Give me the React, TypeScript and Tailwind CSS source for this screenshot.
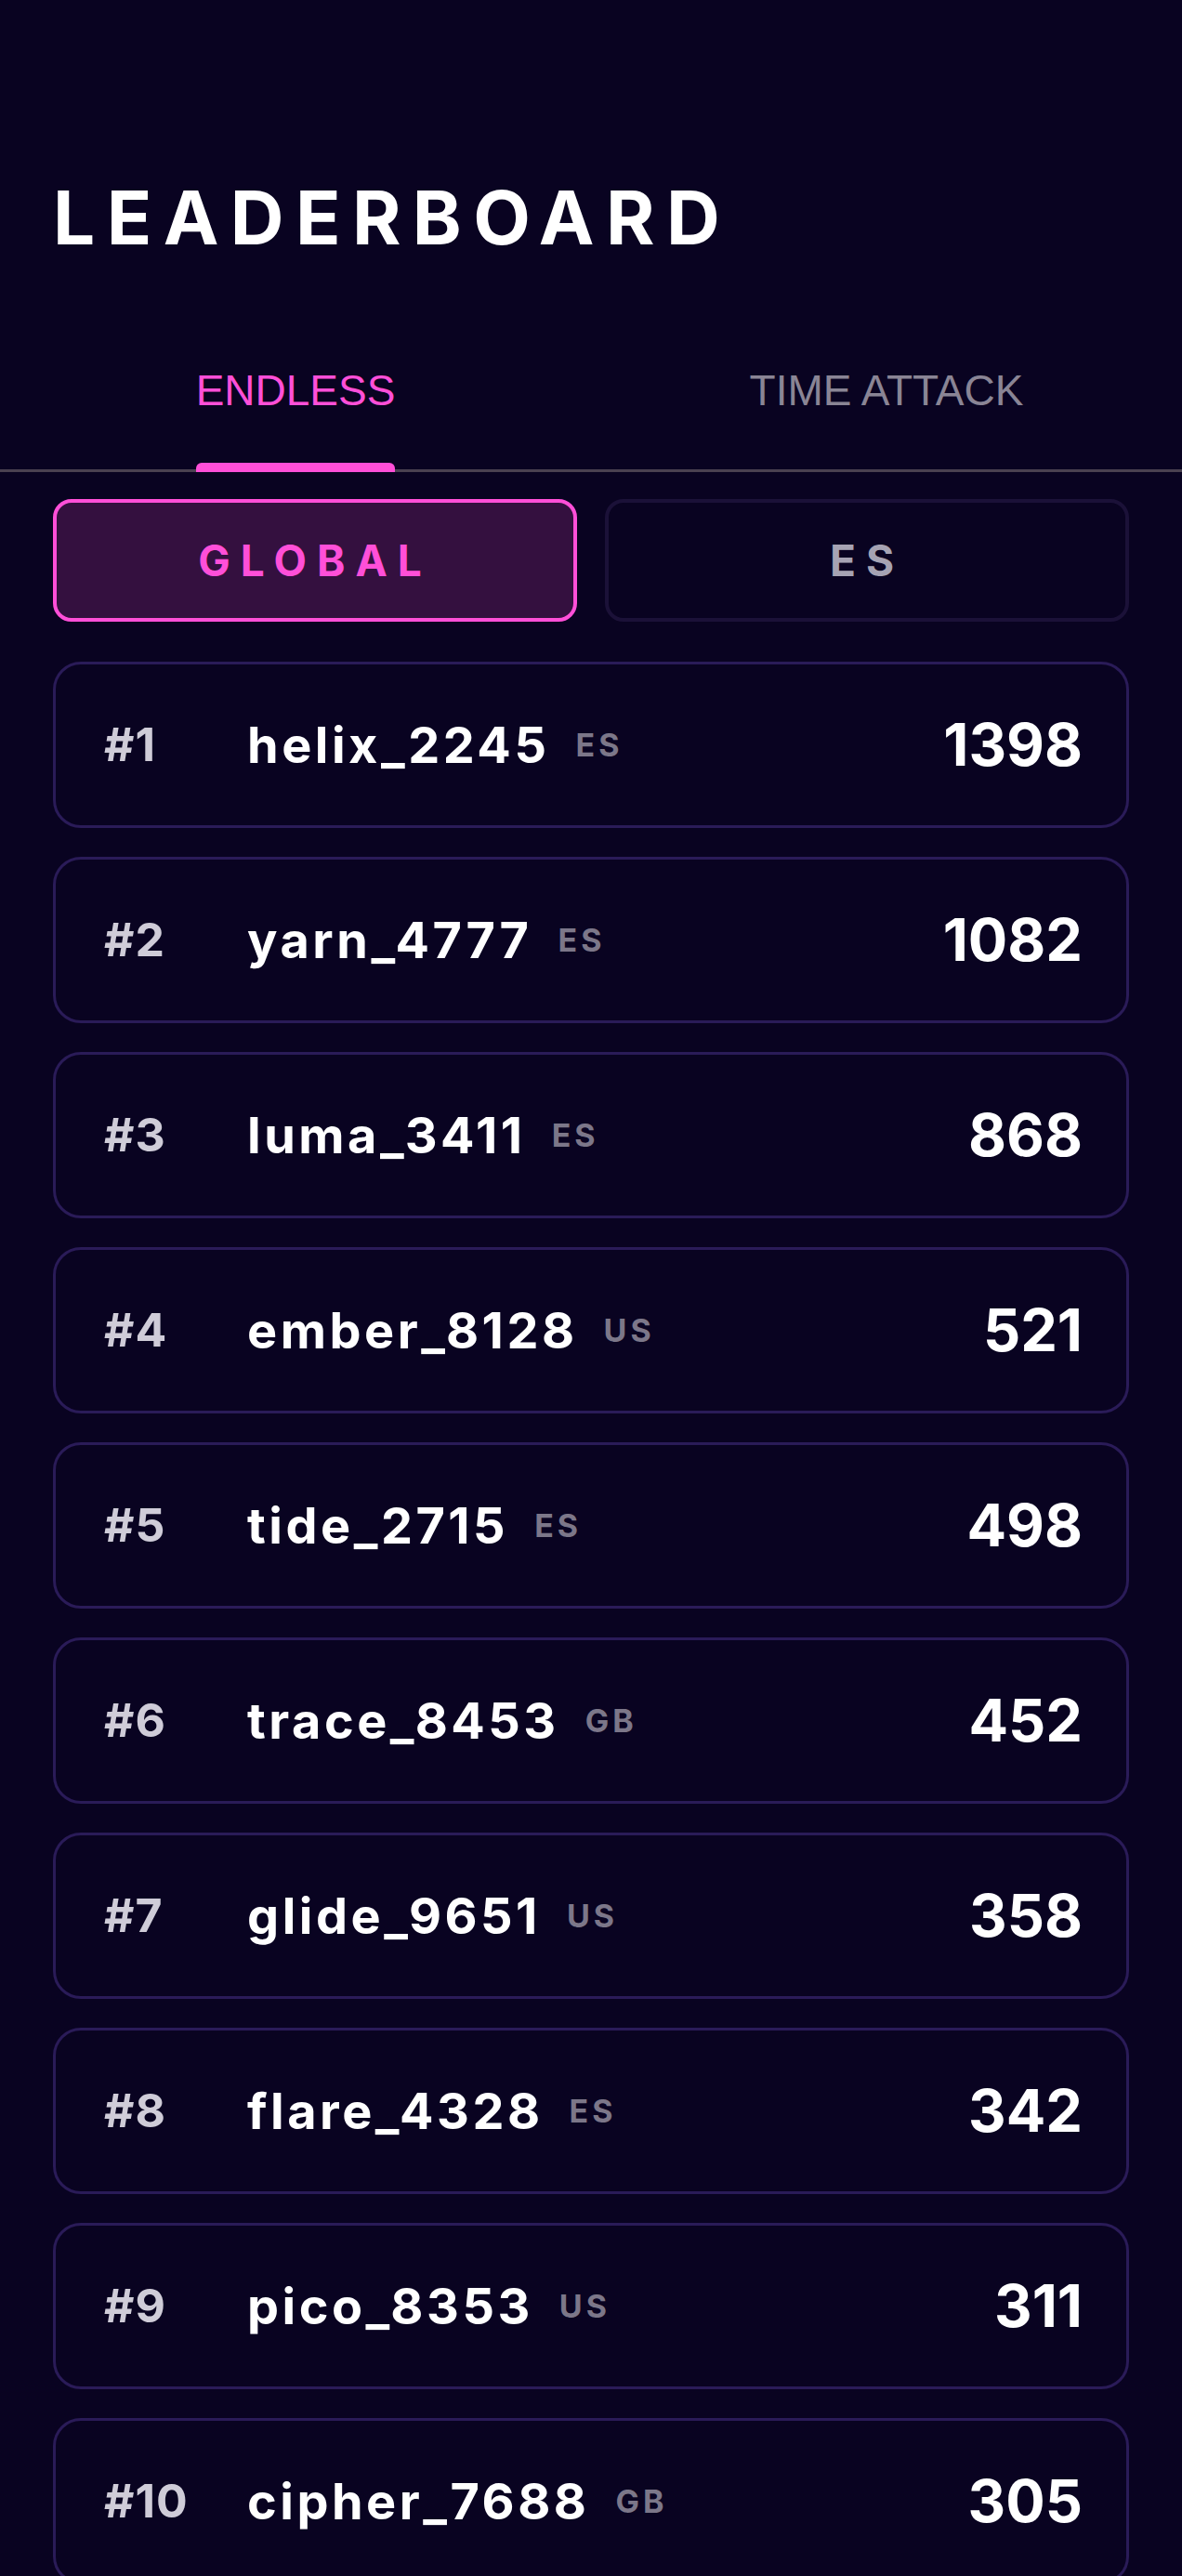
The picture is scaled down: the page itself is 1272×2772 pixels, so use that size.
import { useState } from 'react';

type Entry = {
  rank: number;
  name: string;
  country: string;
  score: number;
};

const ENTRIES: Entry[] = [
  { rank: 1, name: 'helix_2245', country: 'ES', score: 1398 },
  { rank: 2, name: 'yarn_4777', country: 'ES', score: 1082 },
  { rank: 3, name: 'luma_3411', country: 'ES', score: 868 },
  { rank: 4, name: 'ember_8128', country: 'US', score: 521 },
  { rank: 5, name: 'tide_2715', country: 'ES', score: 498 },
  { rank: 6, name: 'trace_8453', country: 'GB', score: 452 },
  { rank: 7, name: 'glide_9651', country: 'US', score: 358 },
  { rank: 8, name: 'flare_4328', country: 'ES', score: 342 },
  { rank: 9, name: 'pico_8353', country: 'US', score: 311 },
  { rank: 10, name: 'cipher_7688', country: 'GB', score: 305 },
];

const MODES = ['ENDLESS', 'TIME ATTACK'];
const SCOPES = ['GLOBAL', 'ES'];

function Row({ entry }: { entry: Entry }) {
  return (
    <li className="flex h-[179px] items-center rounded-[30px] border-[3px] border-[#2a1b58] pr-[47px] pl-[52px]">
      <span className="w-[154px] shrink-0 text-[50px] font-bold tracking-[0.02em] text-[#cfccd8]">
        #{entry.rank}
      </span>
      <span className="text-[54px] font-bold tracking-[0.065em] text-white">{entry.name}</span>
      <span className="ml-[28px] text-[34px] font-bold tracking-[0.12em] text-[#7c7789]">
        {entry.country}
      </span>
      <span className="ml-auto text-[63px] font-bold text-white">{entry.score}</span>
    </li>
  );
}

export default function App() {
  const [mode, setMode] = useState(0);
  const [scope, setScope] = useState(0);

  return (
    <div className="min-h-screen bg-[#090321] font-['Inter',sans-serif]">
      <header className="px-[57px] pt-[194px]">
        <h1 className="text-[80px] leading-none font-bold tracking-[0.155em] text-white">LEADERBOARD</h1>
      </header>

      <nav className="mt-[123px] grid grid-cols-2 border-b-[3px] border-[#4a4150]">
        {MODES.map((m, i) => (
          <div key={m} className="flex justify-center">
            <button
              onClick={() => setMode(i)}
              className={`relative pb-[62px] font-['Liberation_Sans',Arial,sans-serif] text-[46px] leading-none ${
                mode === i ? 'text-[#ff4fd8]' : 'text-[#8a8595]'
              }`}
            >
              {m}
              {mode === i && (
                <span className="absolute right-0 -bottom-[3px] left-0 h-[10px] rounded-t-[6px] bg-[#ff4fd8]" />
              )}
            </button>
          </div>
        ))}
      </nav>

      <div className="mt-[29px] grid grid-cols-2 gap-[30px] px-[57px]">
        {SCOPES.map((s, i) => (
          <button
            key={s}
            onClick={() => setScope(i)}
            className={`h-[132px] rounded-[20px] border-[4px] text-[46px] font-bold tracking-[0.24em] ${
              scope === i
                ? 'border-[#ff4fd8] bg-[#34103f] text-[#ff4fd8]'
                : 'border-[#1b1138] bg-[#090321] text-[#a6a3b3]'
            }`}
          >
            {s}
          </button>
        ))}
      </div>

      <ul className="mt-[43px] flex flex-col gap-[31px] px-[57px]">
        {ENTRIES.map((e) => (
          <Row key={e.rank} entry={e} />
        ))}
      </ul>
    </div>
  );
}
